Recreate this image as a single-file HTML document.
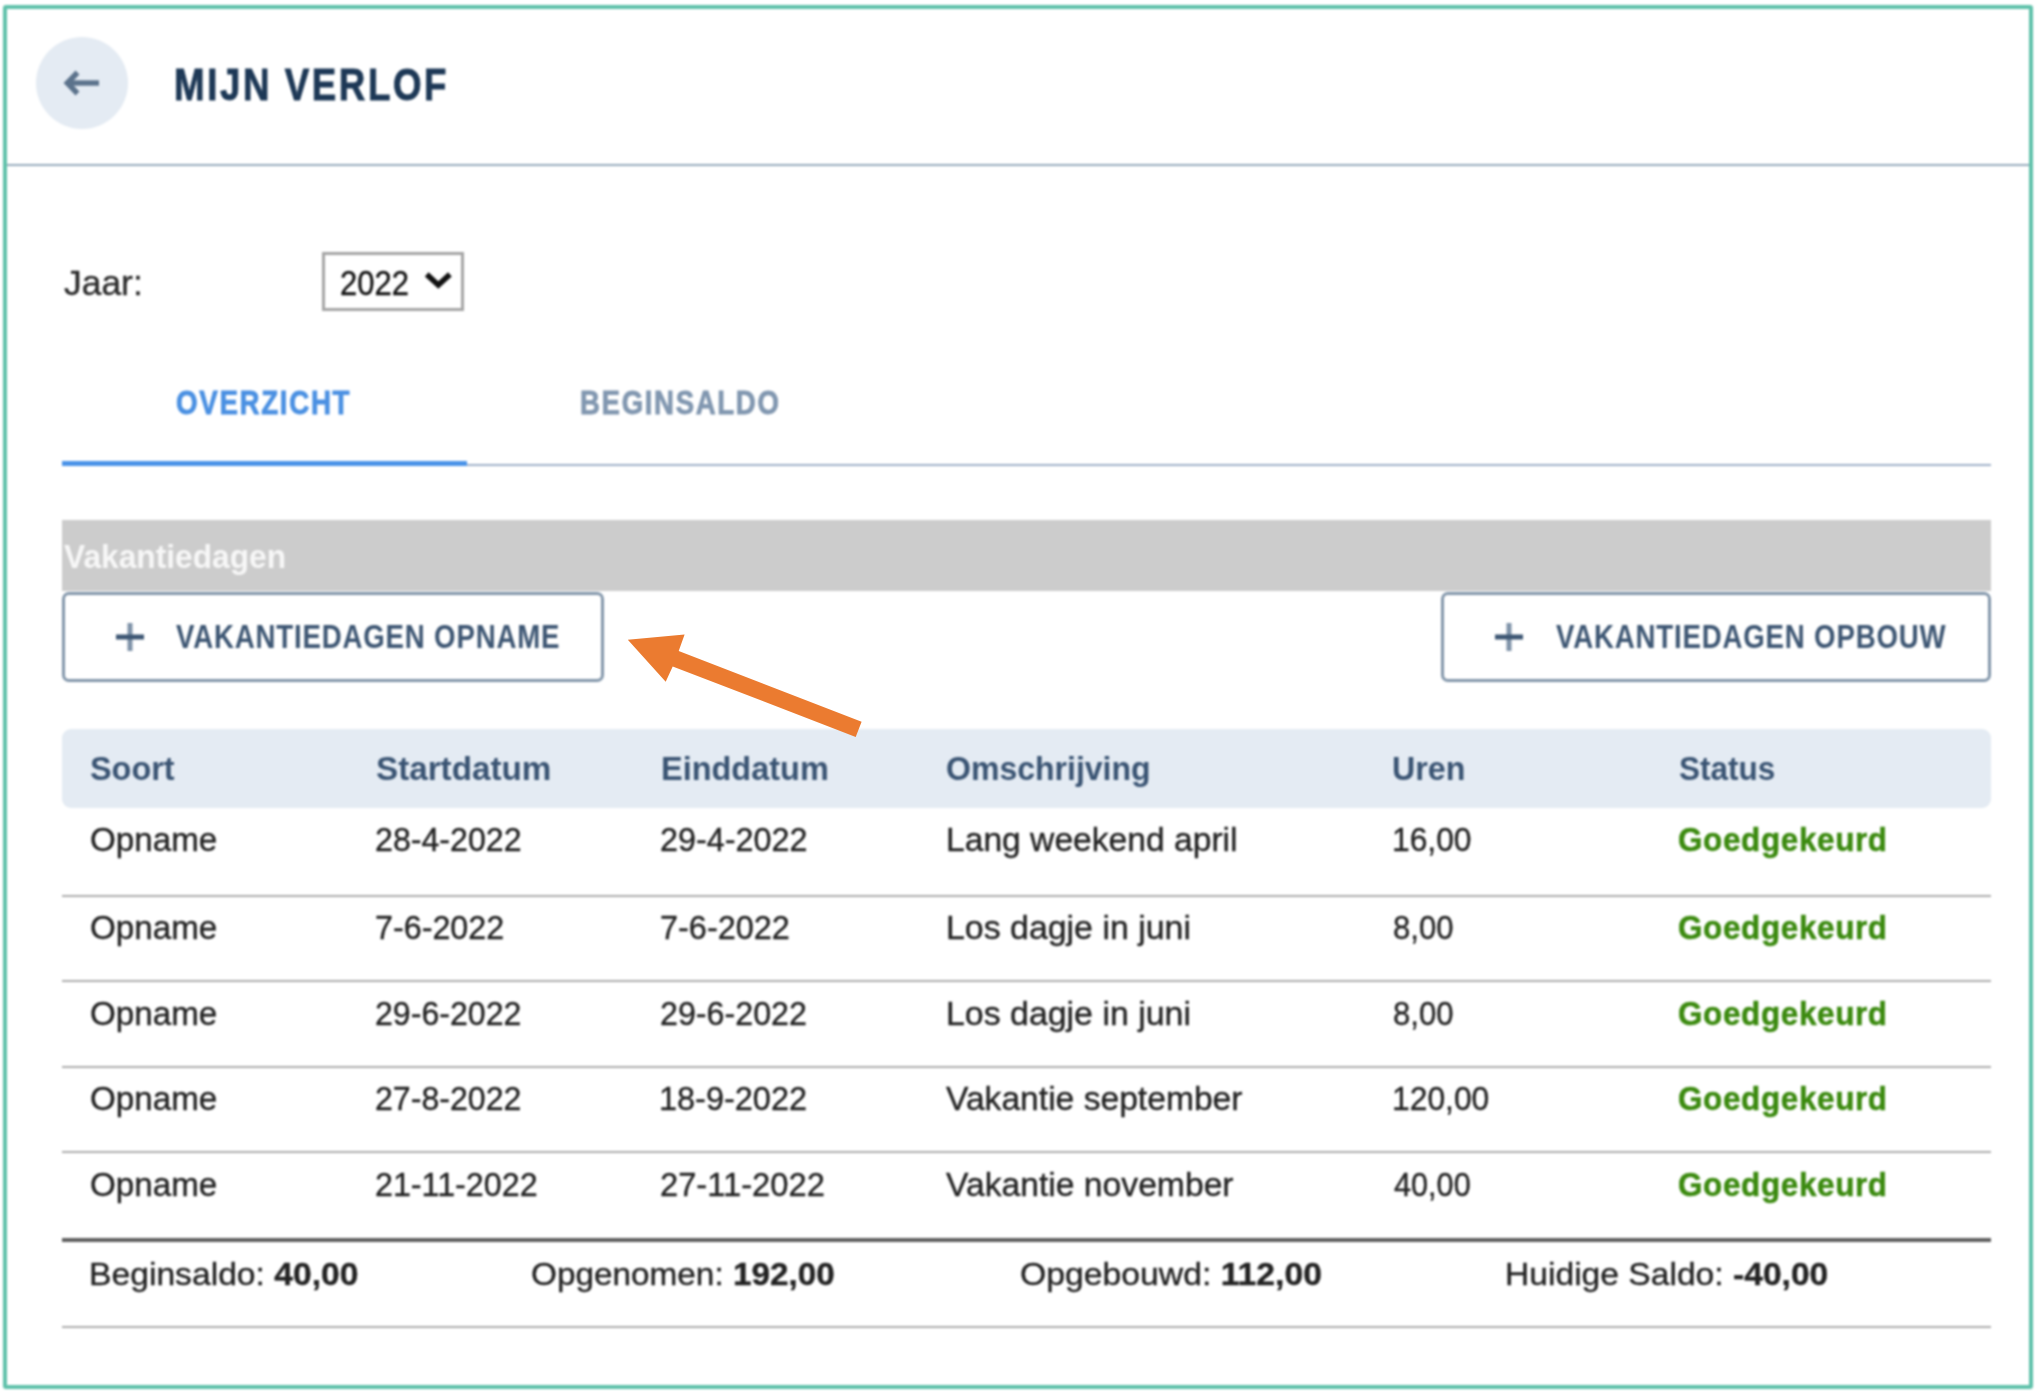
<!DOCTYPE html>
<html><head><meta charset="utf-8"><title>Mijn Verlof</title><style>
html,body{margin:0;padding:0;background:#fff;width:2044px;height:1398px;overflow:hidden;position:relative}
.t{position:absolute;white-space:nowrap;line-height:0;font-family:"Liberation Sans",sans-serif;transform-origin:0 0}
b{font-weight:700}
#w{position:absolute;left:0;top:0;width:2044px;height:1398px;overflow:hidden;background:#fff;filter:blur(0.9px)}
</style></head><body><div id="w">

<div style="position:absolute;left:3px;top:5px;width:2030px;height:1384px;box-sizing:border-box;border:4px solid #5fc1aa;border-radius:3px"></div>
<div style="position:absolute;left:36px;top:37px;width:92px;height:92px;border-radius:50%;background:#e4ebf3"></div>
<svg style="position:absolute;left:0;top:0" width="140" height="140"><g fill="none" stroke="#5c738c" stroke-width="5.4" stroke-linecap="butt" stroke-linejoin="miter"><path d="M99 83 H68"/><path d="M77.5 72.5 L67.3 83 L77.5 93.5"/></g></svg>
<div style="position:absolute;left:7px;top:163.5px;width:2022px;height:2px;background:#97abbc"></div>
<div style="position:absolute;left:322px;top:252px;width:142px;height:59px;box-sizing:border-box;border:3px solid #a5a5a5;background:#fff"></div>
<svg style="position:absolute;left:420px;top:266px" width="36" height="30"><path d="M6.7 8.4 L18.3 19 L29.9 8.4" fill="none" stroke="#111" stroke-width="5.5"/></svg>
<div style="position:absolute;left:62px;top:463.5px;width:1929px;height:2px;background:#9fb0c8"></div>
<div style="position:absolute;left:62px;top:461px;width:405px;height:4.5px;background:#4a93e8"></div>
<div style="position:absolute;left:62px;top:520px;width:1929px;height:70.5px;background:#cccccc"></div>
<div style="position:absolute;left:62px;top:592px;width:542px;height:90px;box-sizing:border-box;border:3px solid #8296aa;border-radius:7px;background:#fff"></div>
<div style="position:absolute;left:1441px;top:592px;width:550px;height:90px;box-sizing:border-box;border:3px solid #8296aa;border-radius:7px;background:#fff"></div>
<svg style="position:absolute;left:100px;top:607px" width="60" height="60"><g stroke="#3d5673" stroke-width="5"><path d="M30 16 V44" stroke="#7f93a8"/><path d="M16 30 H44"/></g></svg>
<svg style="position:absolute;left:1479px;top:607px" width="60" height="60"><g stroke="#3d5673" stroke-width="5"><path d="M30 16 V44" stroke="#7f93a8"/><path d="M16 30 H44"/></g></svg>
<div style="position:absolute;left:62px;top:728.5px;width:1929px;height:79.5px;border-radius:9px;background:#e4ebf3"></div>
<div style="position:absolute;left:62px;top:894.5px;width:1929px;height:2px;background:#adadad"></div>
<div style="position:absolute;left:62px;top:980px;width:1929px;height:2px;background:#adadad"></div>
<div style="position:absolute;left:62px;top:1066px;width:1929px;height:2px;background:#adadad"></div>
<div style="position:absolute;left:62px;top:1151px;width:1929px;height:2px;background:#adadad"></div>
<div style="position:absolute;left:62px;top:1238px;width:1929px;height:4px;background:#606060"></div>
<div style="position:absolute;left:62px;top:1325.5px;width:1929px;height:2px;background:#adadad"></div>
<div class="t" style="left:173.56px;top:85.00px;font-size:45.06px;font-weight:700;color:#1d3856;-webkit-text-stroke:0.9px #1d3856;letter-spacing:0.07em;transform:scaleX(0.8149)">MIJN VERLOF</div>

<div class="t" style="left:63.96px;top:283.00px;font-size:34.16px;font-weight:400;color:#2a2a2a;-webkit-text-stroke:0.35px #2a2a2a;transform:scaleX(1.0366)">Jaar:</div>

<div class="t" style="left:340.13px;top:283.00px;font-size:34.16px;font-weight:400;color:#111111;-webkit-text-stroke:0.35px #111111;transform:scaleX(0.9074)">2022</div>

<div class="t" style="left:176.17px;top:403.00px;font-size:33.29px;font-weight:700;color:#4a90e2;-webkit-text-stroke:0.8px #4a90e2;letter-spacing:0.06em;transform:scaleX(0.8331)">OVERZICHT</div>

<div class="t" style="left:580.33px;top:403.00px;font-size:33.29px;font-weight:700;color:#8197b0;-webkit-text-stroke:0.8px #8197b0;letter-spacing:0.06em;transform:scaleX(0.8290)">BEGINSALDO</div>

<div class="t" style="left:64.00px;top:557.00px;font-size:32.85px;font-weight:700;color:#f7f7f7;transform:scaleX(0.9662)">Vakantiedagen</div>

<div class="t" style="left:176.44px;top:637.00px;font-size:33.14px;font-weight:700;color:#3d5673;letter-spacing:0.03em;transform:scaleX(0.8336)">VAKANTIEDAGEN OPNAME</div>

<div class="t" style="left:1555.56px;top:637.00px;font-size:33.14px;font-weight:700;color:#3d5673;letter-spacing:0.03em;transform:scaleX(0.8336)">VAKANTIEDAGEN OPBOUW</div>

<div class="t" style="left:90.44px;top:769.00px;font-size:32.41px;font-weight:700;color:#3a5473;transform:scaleX(0.9992)">Soort</div>

<div class="t" style="left:375.97px;top:769.00px;font-size:32.41px;font-weight:700;color:#3a5473;transform:scaleX(1.0251)">Startdatum</div>

<div class="t" style="left:661.44px;top:769.00px;font-size:32.41px;font-weight:700;color:#3a5473;transform:scaleX(1.0020)">Einddatum</div>

<div class="t" style="left:946.46px;top:769.00px;font-size:32.41px;font-weight:700;color:#3a5473;transform:scaleX(0.9881)">Omschrijving</div>

<div class="t" style="left:1392.01px;top:769.00px;font-size:32.41px;font-weight:700;color:#3a5473;transform:scaleX(0.9945)">Uren</div>

<div class="t" style="left:1678.50px;top:769.00px;font-size:32.41px;font-weight:700;color:#3a5473;transform:scaleX(0.9717)">Status</div>

<div class="t" style="left:90.47px;top:840.00px;font-size:32.70px;font-weight:400;color:#222222;-webkit-text-stroke:0.35px #222222;transform:scaleX(1.0148)">Opname</div>

<div class="t" style="left:375.02px;top:840.00px;font-size:32.70px;font-weight:400;color:#222222;-webkit-text-stroke:0.35px #222222;transform:scaleX(0.9838)">28-4-2022</div>

<div class="t" style="left:660.02px;top:840.00px;font-size:32.70px;font-weight:400;color:#222222;-webkit-text-stroke:0.35px #222222;transform:scaleX(0.9892)">29-4-2022</div>

<div class="t" style="left:946.23px;top:840.00px;font-size:32.70px;font-weight:400;color:#222222;-webkit-text-stroke:0.35px #222222;transform:scaleX(1.0283)">Lang weekend april</div>

<div class="t" style="left:1391.56px;top:840.00px;font-size:32.70px;font-weight:400;color:#222222;-webkit-text-stroke:0.35px #222222;transform:scaleX(0.9722)">16,00</div>

<div class="t" style="left:1678.04px;top:840.00px;font-size:32.70px;font-weight:700;color:#3b8a0f;-webkit-text-stroke:0.5px #3b8a0f;letter-spacing:0.02em;transform:scaleX(0.9625)">Goedgekeurd</div>

<div class="t" style="left:90.47px;top:928.00px;font-size:32.70px;font-weight:400;color:#222222;-webkit-text-stroke:0.35px #222222;transform:scaleX(1.0148)">Opname</div>

<div class="t" style="left:375.01px;top:928.00px;font-size:32.70px;font-weight:400;color:#222222;-webkit-text-stroke:0.35px #222222;transform:scaleX(0.9876)">7-6-2022</div>

<div class="t" style="left:660.00px;top:928.00px;font-size:32.70px;font-weight:400;color:#222222;-webkit-text-stroke:0.35px #222222;transform:scaleX(0.9924)">7-6-2022</div>

<div class="t" style="left:946.21px;top:928.00px;font-size:32.70px;font-weight:400;color:#222222;-webkit-text-stroke:0.35px #222222;transform:scaleX(1.0367)">Los dagje in juni</div>

<div class="t" style="left:1392.57px;top:928.00px;font-size:32.70px;font-weight:400;color:#222222;-webkit-text-stroke:0.35px #222222;transform:scaleX(0.9511)">8,00</div>

<div class="t" style="left:1678.04px;top:928.00px;font-size:32.70px;font-weight:700;color:#3b8a0f;-webkit-text-stroke:0.5px #3b8a0f;letter-spacing:0.02em;transform:scaleX(0.9625)">Goedgekeurd</div>

<div class="t" style="left:90.47px;top:1014.00px;font-size:32.70px;font-weight:400;color:#222222;-webkit-text-stroke:0.35px #222222;transform:scaleX(1.0148)">Opname</div>

<div class="t" style="left:375.01px;top:1014.00px;font-size:32.70px;font-weight:400;color:#222222;-webkit-text-stroke:0.35px #222222;transform:scaleX(0.9824)">29-6-2022</div>

<div class="t" style="left:660.02px;top:1014.00px;font-size:32.70px;font-weight:400;color:#222222;-webkit-text-stroke:0.35px #222222;transform:scaleX(0.9863)">29-6-2022</div>

<div class="t" style="left:946.21px;top:1014.00px;font-size:32.70px;font-weight:400;color:#222222;-webkit-text-stroke:0.35px #222222;transform:scaleX(1.0367)">Los dagje in juni</div>

<div class="t" style="left:1392.57px;top:1014.00px;font-size:32.70px;font-weight:400;color:#222222;-webkit-text-stroke:0.35px #222222;transform:scaleX(0.9511)">8,00</div>

<div class="t" style="left:1678.04px;top:1014.00px;font-size:32.70px;font-weight:700;color:#3b8a0f;-webkit-text-stroke:0.5px #3b8a0f;letter-spacing:0.02em;transform:scaleX(0.9625)">Goedgekeurd</div>

<div class="t" style="left:90.47px;top:1099.00px;font-size:32.70px;font-weight:400;color:#222222;-webkit-text-stroke:0.35px #222222;transform:scaleX(1.0148)">Opname</div>

<div class="t" style="left:375.01px;top:1099.00px;font-size:32.70px;font-weight:400;color:#222222;-webkit-text-stroke:0.35px #222222;transform:scaleX(0.9824)">27-8-2022</div>

<div class="t" style="left:659.02px;top:1099.00px;font-size:32.70px;font-weight:400;color:#222222;-webkit-text-stroke:0.35px #222222;transform:scaleX(0.9932)">18-9-2022</div>

<div class="t" style="left:946.08px;top:1099.00px;font-size:32.70px;font-weight:400;color:#222222;-webkit-text-stroke:0.35px #222222;transform:scaleX(1.0283)">Vakantie september</div>

<div class="t" style="left:1391.56px;top:1099.00px;font-size:32.70px;font-weight:400;color:#222222;-webkit-text-stroke:0.35px #222222;transform:scaleX(0.9733)">120,00</div>

<div class="t" style="left:1678.04px;top:1099.00px;font-size:32.70px;font-weight:700;color:#3b8a0f;-webkit-text-stroke:0.5px #3b8a0f;letter-spacing:0.02em;transform:scaleX(0.9625)">Goedgekeurd</div>

<div class="t" style="left:90.47px;top:1185.00px;font-size:32.70px;font-weight:400;color:#222222;-webkit-text-stroke:0.35px #222222;transform:scaleX(1.0148)">Opname</div>

<div class="t" style="left:375.02px;top:1185.00px;font-size:32.70px;font-weight:400;color:#222222;-webkit-text-stroke:0.35px #222222;transform:scaleX(0.9866)">21-11-2022</div>

<div class="t" style="left:659.99px;top:1185.00px;font-size:32.70px;font-weight:400;color:#222222;-webkit-text-stroke:0.35px #222222;transform:scaleX(1.0002)">27-11-2022</div>

<div class="t" style="left:946.08px;top:1185.00px;font-size:32.70px;font-weight:400;color:#222222;-webkit-text-stroke:0.35px #222222;transform:scaleX(1.0299)">Vakantie november</div>

<div class="t" style="left:1393.53px;top:1185.00px;font-size:32.70px;font-weight:400;color:#222222;-webkit-text-stroke:0.35px #222222;transform:scaleX(0.9377)">40,00</div>

<div class="t" style="left:1678.04px;top:1185.00px;font-size:32.70px;font-weight:700;color:#3b8a0f;-webkit-text-stroke:0.5px #3b8a0f;letter-spacing:0.02em;transform:scaleX(0.9625)">Goedgekeurd</div>

<div class="t" style="left:88.88px;top:1274.00px;font-size:31.98px;font-weight:400;color:#222222;-webkit-text-stroke:0.35px #222222;transform:scaleX(1.0530)">Beginsaldo: <b>40,00</b></div>

<div class="t" style="left:531.43px;top:1274.00px;font-size:31.98px;font-weight:400;color:#222222;-webkit-text-stroke:0.35px #222222;transform:scaleX(1.0423)">Opgenomen: <b>192,00</b></div>

<div class="t" style="left:1019.93px;top:1274.00px;font-size:31.98px;font-weight:400;color:#222222;-webkit-text-stroke:0.35px #222222;transform:scaleX(1.0550)">Opgebouwd: <b>112,00</b></div>

<div class="t" style="left:1504.85px;top:1274.00px;font-size:31.98px;font-weight:400;color:#222222;-webkit-text-stroke:0.35px #222222;transform:scaleX(1.0515)">Huidige Saldo: <b>-40,00</b></div>

</div>
<svg style="position:absolute;left:0;top:0" width="900" height="760"><polygon fill="#eb7b30" points="627.8,639.8 684.6,634.5 678.7,651.0 861.6,721.7 855.7,736.9 672.7,666.5 665.7,681.8"/></svg>
</body></html>
